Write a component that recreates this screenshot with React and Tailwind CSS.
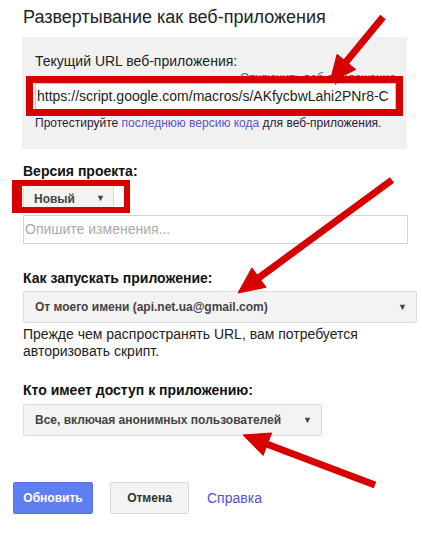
import React from 'react';

const Caret = () => <span className="text-[9px] leading-none text-[#444]">▼</span>;

const Select = ({ label, width }) => (
  <div
    className={`flex h-[32px] items-center justify-between rounded-[2px] border border-[#dcdcdc] bg-[#f3f3f3] pl-[11px] pr-[9px] ${width}`}
  >
    <span className="text-[12px] font-bold text-[#444]">{label}</span>
    <Caret />
  </div>
);

const App = () => {
  return (
    <div
      className="relative h-[533px] w-[422px] overflow-hidden bg-white px-[23px] text-[#222]"
      style={{ fontFamily: '"Liberation Sans", Arial, sans-serif' }}
    >
      <h1 className="mt-[7px] text-[18px] leading-[21px] font-normal text-[#222]">
        Развертывание как веб-приложения
      </h1>

      <div className="-ml-px mt-[9px] w-[385px] bg-[#f1f1f1] pb-[18px] pl-[13px] pr-[11px] pt-[16px]">
        <div className="text-[14px] leading-4">Текущий URL веб-приложения:</div>
        <div className="mt-[2px] text-right text-[12px] leading-[14px] text-[#5555cc]">
          Отключить веб-приложение
        </div>
        <div className="-mt-[2px] flex h-[27px] items-center border border-[#c8c8c8] bg-white pl-[1px] text-[14px] whitespace-nowrap overflow-hidden">
          https://script.google.com/macros/s/AKfycbwLahi2PNr8-C
        </div>
        <div className="mt-[6px] text-[12px] leading-[15px] whitespace-nowrap text-[#2a1a3a]">
          Протестируйте <span className="text-[#5555c8]">последнюю версию кода</span> для веб-приложения.
        </div>
      </div>

      <div className="mt-[14px] text-[14px] leading-4 font-bold text-[#111]">Версия проекта:</div>
      <div className="mt-[5px] flex h-[29px] w-[91px] items-center justify-between rounded-[2px] border border-[#dcdcdc] bg-[#f3f3f3] pl-[10px] pr-[8px]">
        <span className="text-[12px] font-bold text-[#444]">Новый</span>
        <Caret />
      </div>
      <div className="mt-[2px] flex h-[29px] w-[385px] items-center border border-[#d4d4d4] bg-white pl-[1px] text-[14px] text-[#aaa]">
        Опишите изменения...
      </div>

      <div className="mt-[26px] text-[14px] leading-4 font-bold text-[#111]">Как запускать приложение:</div>
      <div className="mt-[5px]">
        <Select label="От моего имени (api.net.ua@gmail.com)" width="w-[394px]" />
      </div>
      <div className="mt-[3px] text-[14px] leading-[17px] text-[#222]">
        Прежде чем распространять URL, вам потребуется
        <br />
        авторизовать скрипт.
      </div>

      <div className="mt-[22px] text-[14px] leading-4 font-bold text-[#111]">Кто имеет доступ к приложению:</div>
      <div className="mt-[6px]">
        <Select label="Все, включая анонимных пользователей" width="w-[299px]" />
      </div>

      <div className="-ml-[10px] mt-[46px] flex items-center">
        <button className="h-[32px] w-[80px] rounded-[2px] border border-[#5573e0] bg-[#5f7ff0] text-[12px] font-bold text-white">
          Обновить
        </button>
        <button className="ml-[17px] h-[32px] w-[79px] rounded-[2px] border border-[#d8d8d8] bg-[#f3f3f3] text-[12px] font-bold text-[#333]">
          Отмена
        </button>
        <span className="ml-[18px] text-[14px] text-[#5050d4]">Справка</span>
      </div>

      {/* annotations */}
      <div className="pointer-events-none absolute left-[26px] top-[76px] h-[40px] w-[377px] border-[7px] border-[#d60000]" />
      <div className="pointer-events-none absolute left-[12px] top-[180px] h-[33px] w-[118px] border-[6px] border-l-[10px] border-[#d60000]" />
      <svg className="pointer-events-none absolute left-0 top-0" width="422" height="533">
        <g fill="#d60000" stroke="#d60000" strokeWidth="7">
          <line x1="383" y1="17" x2="346" y2="62" />
          <polygon points="330,82 355.7,69.5 337.1,54.3" strokeWidth="1" />
          <line x1="392" y1="180" x2="259" y2="277.6" />
          <polygon points="238,293 266.1,287.3 251.9,267.9" strokeWidth="1" />
          <line x1="375" y1="485" x2="267.3" y2="444.2" />
          <polygon points="243,435 263.1,455.4 271.6,433" strokeWidth="1" />
        </g>
      </svg>
    </div>
  );
};

export default App;
